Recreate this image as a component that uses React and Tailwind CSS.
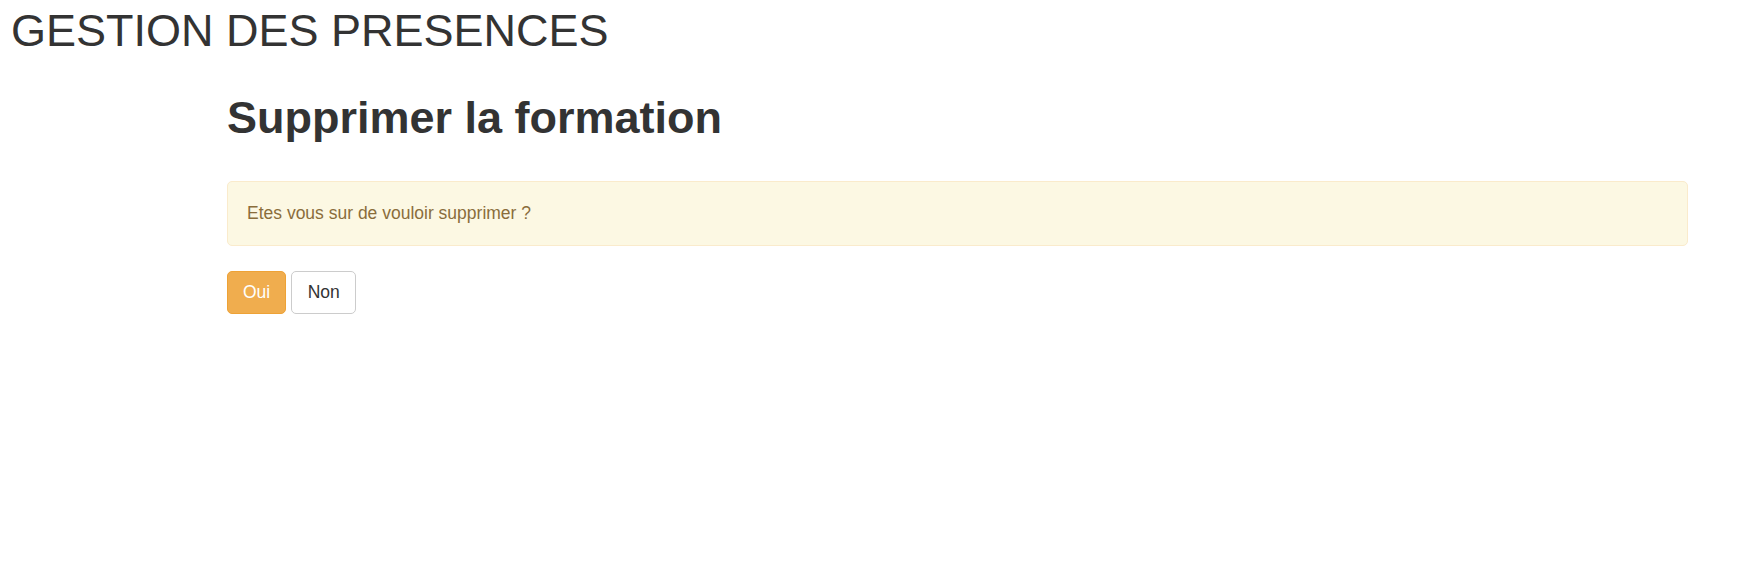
import React from 'react';

export default function App() {
  return (
    <div className="min-h-screen bg-white text-[#333] font-['Liberation_Sans',Arial,sans-serif]">
      <h1 className="pl-[11px] pt-[6px] text-[45px] leading-[49.5px] font-normal">
        GESTION DES PRESENCES
      </h1>

      <div className="ml-[227px] mr-[55px]">
        <h2 className="mt-[37px] text-[45px] leading-[49.5px] font-bold">
          Supprimer la formation
        </h2>

        {/* Confirmation */}
        <div className="mt-[39px] px-[19px] py-[18.75px] bg-[#fcf8e3] border border-[#faebcc] rounded-[5px] text-[#8a6d3b] text-[17.5px] leading-[25px]">
          Etes vous sur de vouloir supprimer ?
        </div>

        <div className="mt-[25px] flex gap-[5px]">
          <button className="px-[15px] py-[8px] text-[17.5px] leading-[25px] text-white bg-[#f0ad4e] border border-[#eea236] rounded-[5px]">
            Oui
          </button>
          <button className="px-[15.5px] py-[8px] text-[17.5px] leading-[25px] text-[#333] bg-white border border-[#ccc] rounded-[5px]">
            Non
          </button>
        </div>
      </div>
    </div>
  );
}
